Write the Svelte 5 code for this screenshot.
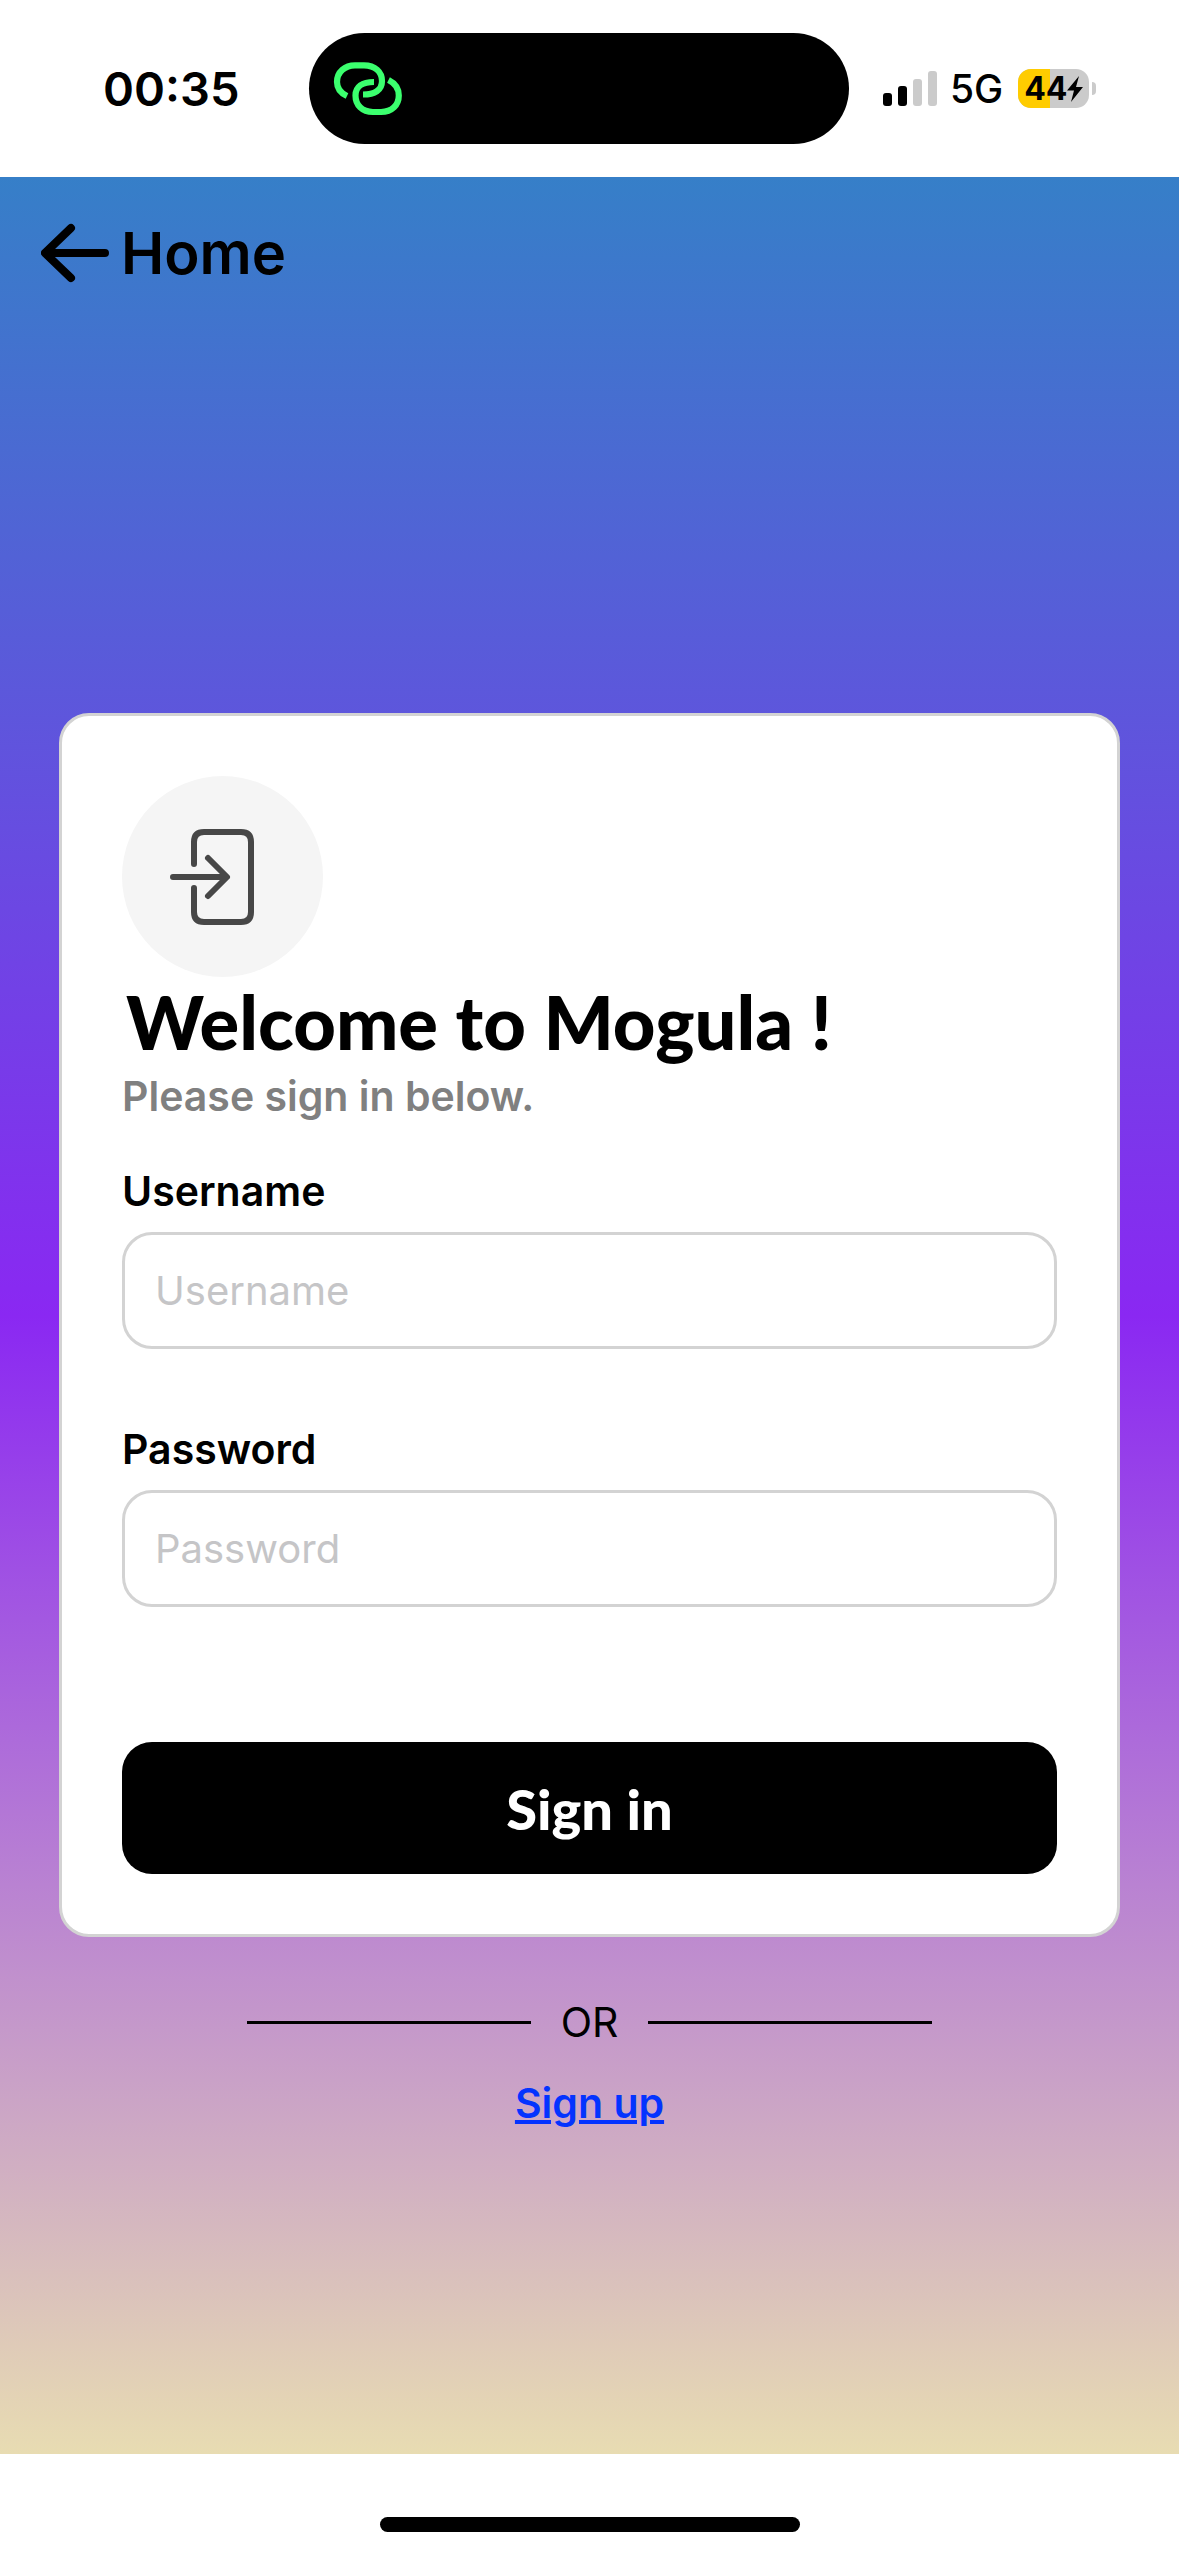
<script>
  let username = $state('');
  let password = $state('');
  const bars = [
    { height: 13, on: true },
    { height: 20, on: true },
    { height: 27, on: false },
    { height: 35, on: false }
  ];
  const charge = 44;
</script>

<div class="screen">
  <header class="status">
    <div class="clock"><time>00:35</time></div>
    <div class="island">
      <svg width="70" height="56" viewBox="0 0 70 56" fill="none" stroke="#3bff6e" stroke-width="6.200" aria-hidden="true">
        <path d="M14 35C7.500 32 4 27 4 21C4 11 12 4.300 22 4.300H31C42 4.300 49 11 49 20C49 29 42 33.500 30 33.500" />
        <path d="M41 21C29 21 22.500 26 22.500 34.500C22.500 44 29 51 40 51H48C59 51 65.800 44 65.800 34.500C65.800 27 61.500 22 55.500 19" />
      </svg>
    </div>
    <div class="indicators">
      <div class="signal">
        {#each bars as bar}
          <i class:on={bar.on} style="height: {bar.height}px"></i>
        {/each}
      </div>
      <span class="network">5G</span>
      <div class="battery">
        <div class="level">
          <div class="fill" style="width: {charge}%"></div>
          <span>{charge}</span>
          <svg width="16" height="26" viewBox="0 0 16 26" aria-hidden="true"><path d="M12 0L0 14.500H7L4 26L16 11H9Z" /></svg>
        </div>
        <div class="tip"></div>
      </div>
    </div>
  </header>

  <main>
    <nav>
      <a class="back" href="#home">
        <svg width="68" height="60" viewBox="0 0 68 60" fill="none" stroke="#000" stroke-width="8" stroke-linecap="round" stroke-linejoin="round" aria-hidden="true">
          <path d="M30 5L4 30L30 55M5 30H64" />
        </svg>
        <span>Home</span>
      </a>
    </nav>

    <form class="card" onsubmit={(e) => e.preventDefault()}>
      <div class="badge">
        <svg width="84" height="96" viewBox="0 0 84 96" fill="none" stroke="#474747" stroke-width="6" stroke-linecap="round" stroke-linejoin="round" aria-hidden="true">
          <path d="M24 35V13Q24 3 34 3H71Q81 3 81 13V83Q81 93 71 93H34Q24 93 24 83V59" />
          <path d="M3 48H56M38 29L57 48L38 67" />
        </svg>
      </div>
      <h1>Welcome to Mogula !</h1>
      <p class="lead">Please sign in below.</p>
      <div class="field">
        <label for="username">Username</label>
        <input id="username" type="text" placeholder="Username" bind:value={username} />
      </div>
      <div class="field">
        <label for="password">Password</label>
        <input id="password" type="password" placeholder="Password" bind:value={password} />
      </div>
      <button type="submit">Sign in</button>
    </form>

    <div class="divider"><span>OR</span></div>
    <a class="signup" href="#signup">Sign up</a>
  </main>

  <footer><div class="home-bar"></div></footer>
</div>

<style>
  :global(body) {
    margin: 0;
    background: #fff;
  }
  .screen {
    display: flex;
    flex-direction: column;
    min-height: 100vh;
    font-family: Inter, 'Liberation Sans', sans-serif;
    font-size: 41px;
    line-height: 50px;
    color: #000;
  }
  .status {
    display: grid;
    grid-template-columns: 309fr 540px 330fr;
    align-items: center;
    padding: 33px 0;
    height: 111px;
  }
  .clock {
    padding-left: 103px;
    font-size: 47px;
    font-weight: 600;
  }
  .island {
    display: flex;
    align-items: center;
    height: 111px;
    padding-left: 24px;
    box-sizing: border-box;
    border-radius: 56px;
    background: #000;
  }
  .indicators {
    display: flex;
    align-items: center;
    padding-left: 34px;
  }
  .signal {
    display: flex;
    align-items: flex-end;
    gap: 6px;
    height: 35px;
  }
  .signal i {
    width: 9px;
    border-radius: 3px;
    background: #cbcbcb;
  }
  .signal i.on {
    background: #000;
  }
  .network {
    margin: 0 15px 0 13px;
    font-size: 39px;
    font-weight: 500;
  }
  .battery {
    display: flex;
    align-items: center;
    gap: 3px;
  }
  .level {
    position: relative;
    display: flex;
    align-items: center;
    justify-content: center;
    width: 71px;
    height: 39px;
    border-radius: 13px;
    background: #cbcbcb;
    overflow: hidden;
    font-size: 32px;
    font-weight: 700;
  }
  .level span,
  .level svg {
    position: relative;
  }
  .fill {
    position: absolute;
    inset: 0 auto 0 0;
    background: #ffcc00;
  }
  .tip {
    width: 4px;
    height: 13px;
    border-radius: 0 6px 6px 0;
    background: #cbcbcb;
  }
  main {
    flex: 1;
    display: flex;
    flex-direction: column;
    padding: 40px 59px 0;
    background: linear-gradient(#367fc8, #8a28f2 50%, #e8dcb2);
  }
  nav {
    display: flex;
    margin: 0 -18px 424px;
  }
  .back {
    display: flex;
    align-items: center;
    gap: 12px;
    height: 72px;
    color: #000;
    font-size: 58px;
    font-weight: 600;
    text-decoration: none;
  }
  .card {
    display: flex;
    flex-direction: column;
    padding: 60px;
    border: 3px solid #d3d3d3;
    border-radius: 30px;
    background: #fff;
  }
  .badge {
    display: flex;
    align-items: center;
    justify-content: center;
    width: 201px;
    height: 201px;
    padding-right: 22px;
    box-sizing: border-box;
    border-radius: 50%;
    background: #f5f5f5;
  }
  h1 {
    margin: 0;
    padding: 0 0 4px 4px;
    font-family: Lato, sans-serif;
    font-size: 74px;
    font-weight: 900;
    line-height: 90px;
  }
  .lead {
    margin: 0 0 45px;
    color: #808080;
    font-weight: 600;
  }
  .field {
    display: flex;
    flex-direction: column;
    gap: 16px;
    margin-bottom: 75px;
  }
  .field label {
    font-weight: 600;
  }
  input {
    width: 100%;
    height: 117px;
    padding: 0 30px;
    box-sizing: border-box;
    border: 3px solid #d3d3d3;
    border-radius: 30px;
    background: #fff;
    font: inherit;
    font-size: 40px;
    color: #000;
  }
  input::placeholder {
    color: #c5c5c7;
    opacity: 1;
  }
  button {
    height: 132px;
    margin-top: 60px;
    border: 0;
    border-radius: 30px;
    background: #000;
    color: #fff;
    font-family: Lato, sans-serif;
    font-size: 56px;
    font-weight: 900;
  }
  .divider {
    display: flex;
    align-items: center;
    gap: 30px;
    margin: 60px 188px 31px;
  }
  .divider::before,
  .divider::after {
    content: '';
    flex: 1;
    height: 3px;
    background: #000;
  }
  .signup {
    align-self: center;
    color: #0433ff;
    font-weight: 600;
    text-decoration: underline;
    text-decoration-thickness: 4px;
  }
  footer {
    display: flex;
    justify-content: center;
    align-items: flex-end;
    height: 102px;
    padding-bottom: 24px;
    box-sizing: border-box;
  }
  .home-bar {
    width: 420px;
    height: 15px;
    border-radius: 8px;
    background: #000;
  }
</style>
